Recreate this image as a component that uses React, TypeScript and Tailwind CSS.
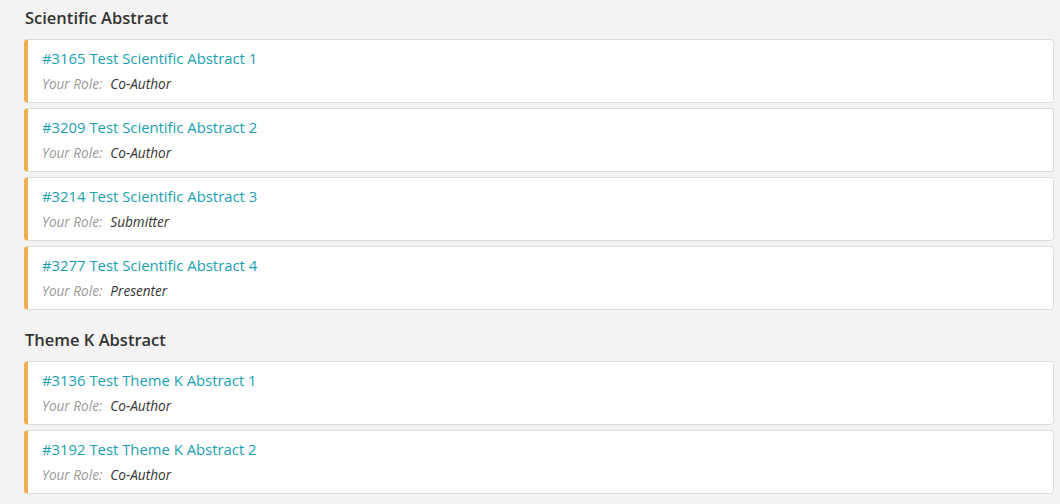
import React from 'react';

type Item = { id: number; title: string; role: string };

const sections: { name: string; items: Item[] }[] = [
  {
    name: 'Scientific Abstract',
    items: [
      { id: 3165, title: 'Test Scientific Abstract 1', role: 'Co-Author' },
      { id: 3209, title: 'Test Scientific Abstract 2', role: 'Co-Author' },
      { id: 3214, title: 'Test Scientific Abstract 3', role: 'Submitter' },
      { id: 3277, title: 'Test Scientific Abstract 4', role: 'Presenter' },
    ],
  },
  {
    name: 'Theme K Abstract',
    items: [
      { id: 3136, title: 'Test Theme K Abstract 1', role: 'Co-Author' },
      { id: 3192, title: 'Test Theme K Abstract 2', role: 'Co-Author' },
    ],
  },
];

export default function App() {
  return (
    <div className="min-h-[504px] bg-[#f3f3f3] pl-6 pr-1.5 pt-1.5 font-['Open_Sans',sans-serif]">
      {sections.map((section, si) => (
        <div key={section.name} className={si > 0 ? 'mt-[18px]' : ''}>
          <h3 className="mb-[9px] h-6 pl-px text-[16.5px] font-semibold leading-6 text-[#333]">{section.name}</h3>
          <div className="flex flex-col gap-[5px]">
            {section.items.map((item) => (
              <div
                key={item.id}
                className="h-16 rounded border border-l-4 border-[#dcdcdc] border-l-[#f0ad4e] bg-white pl-[14px] pt-[7px]"
              >
                <a className="block text-[14.85px] leading-[22px] text-[#1a9fb0]">
                  #{item.id} {item.title}
                </a>
                <div className="mt-[5px] flex gap-[8px] text-[13.6px] italic leading-[20px]">
                  <span className="text-[#9a9a9a]">Your Role:</span>
                  <span className="text-[#333]">{item.role}</span>
                </div>
              </div>
            ))}
          </div>
        </div>
      ))}
    </div>
  );
}
